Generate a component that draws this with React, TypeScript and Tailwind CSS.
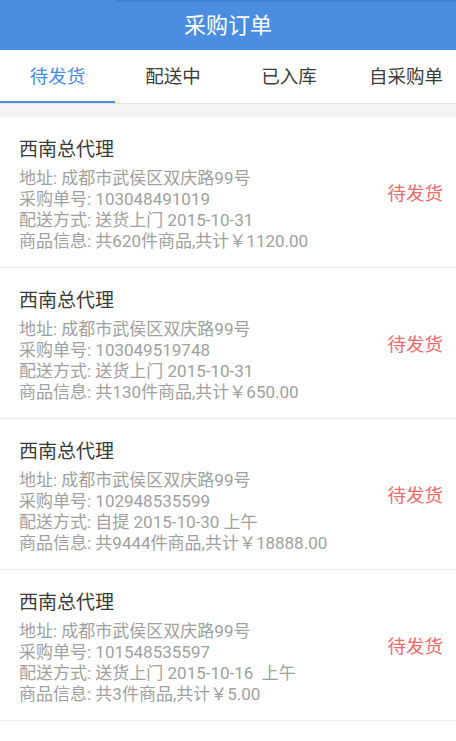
import React from "react";

type Order = {
  no: string;
  ship: string;
  goods: string;
};

const orders: Order[] = [
  { no: "103048491019", ship: "送货上门 2015-10-31", goods: "共620件商品,共计￥1120.00" },
  { no: "103049519748", ship: "送货上门 2015-10-31", goods: "共130件商品,共计￥650.00" },
  { no: "102948535599", ship: "自提 2015-10-30 上午", goods: "共9444件商品,共计￥18888.00" },
  { no: "101548535597", ship: "送货上门 2015-10-16  上午", goods: "共3件商品,共计￥5.00" },
];

const tabs = ["待发货", "配送中", "已入库", "自采购单"];

export default function App() {
  return (
    <div
      className="min-h-screen w-[456px] overflow-hidden bg-white"
      style={{ fontFamily: "Roboto, 'Noto Sans CJK SC', sans-serif" }}
    >
      <div className="relative flex h-[50px] items-center justify-center bg-[#4a8de1]">
        <div className="absolute left-[115px] right-0 top-0 h-[3px] bg-gradient-to-b from-[#3f7ccb] to-[#4a8de1]" />
        <span className="text-[22px] text-white">采购订单</span>
      </div>
      <div className="h-[54px] overflow-hidden border-b border-[#e2e2e2] bg-white">
        <div className="grid h-full w-[465px] grid-cols-[115px_116px_116px_118px]">
          {tabs.map((t, i) => (
            <div
              key={t}
              className={
                i === 0
                  ? "flex items-center justify-center border-b-[2px] border-[#4a8de1] pt-[4px] text-[18.5px] text-[#4a8de1]"
                  : "flex items-center justify-center pb-[2px] pt-[4px] text-[18.5px] text-[#3c3c3c]"
              }
            >
              {t}
            </div>
          ))}
        </div>
      </div>
      <div className="h-[13px] bg-[#f4f4f4]" />
      <div>
        {orders.map((o, i) => (
          <div
            key={i}
            className="flex h-[151px] items-center border-b border-[#ececec] pl-[19px] pr-[13px] pt-[5px]"
          >
            <div className="flex flex-1 flex-col">
              <div className="text-[19px] leading-[24px] text-[#3a3a3a]">西南总代理</div>
              <div className="mt-[6px] whitespace-pre text-[17px] leading-[21px] text-[#a0a0a0]">
                <div>地址: 成都市武侯区双庆路99号</div>
                <div>采购单号: {o.no}</div>
                <div>配送方式: {o.ship}</div>
                <div>商品信息: {o.goods}</div>
              </div>
            </div>
            <div className="text-[18.5px] text-[#ec6b6b]">待发货</div>
          </div>
        ))}
      </div>
    </div>
  );
}
